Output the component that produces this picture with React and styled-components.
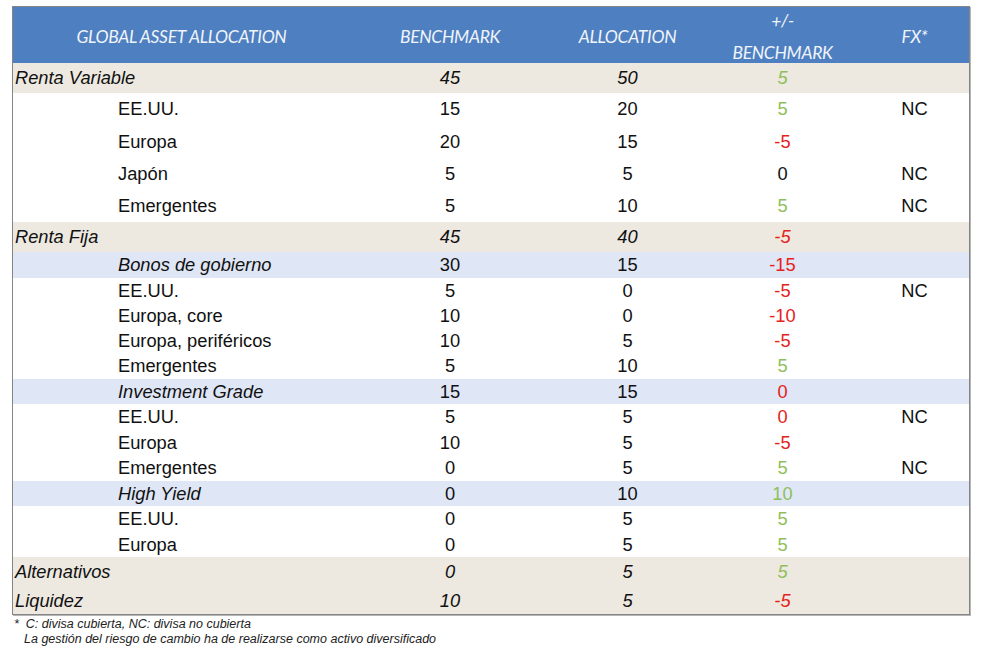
import React from 'react'
import styled, { createGlobalStyle } from 'styled-components'

const GlobalStyle = createGlobalStyle`
  body {
    margin: 0;
    background: #fff;
    font-family: 'Liberation Sans', Arial, sans-serif;
  }
`

const G = '#8fbf5a'
const R = '#e5231b'
const K = '#111'

const rows = [
  { kind: 'group', h: 30, label: 'Renta Variable', b: '45', a: '50', d: ['5', G] },
  { kind: 'item', h: 32.5, label: 'EE.UU.', b: '15', a: '20', d: ['5', G], fx: 'NC' },
  { kind: 'item', h: 32.5, label: 'Europa', b: '20', a: '15', d: ['-5', R] },
  { kind: 'item', h: 32.5, label: 'Japón', b: '5', a: '5', d: ['0', K], fx: 'NC' },
  { kind: 'item', h: 31.5, label: 'Emergentes', b: '5', a: '10', d: ['5', G], fx: 'NC' },
  { kind: 'group', h: 30, label: 'Renta Fija', b: '45', a: '40', d: ['-5', R] },
  { kind: 'sub', h: 26, label: 'Bonos de gobierno', b: '30', a: '15', d: ['-15', R] },
  { kind: 'item', h: 25, label: 'EE.UU.', b: '5', a: '0', d: ['-5', R], fx: 'NC' },
  { kind: 'item', h: 25, label: 'Europa, core', b: '10', a: '0', d: ['-10', R] },
  { kind: 'item', h: 25, label: 'Europa, periféricos', b: '10', a: '5', d: ['-5', R] },
  { kind: 'item', h: 26, label: 'Emergentes', b: '5', a: '10', d: ['5', G] },
  { kind: 'sub', h: 25, label: 'Investment Grade', b: '15', a: '15', d: ['0', R] },
  { kind: 'item', h: 26, label: 'EE.UU.', b: '5', a: '5', d: ['0', R], fx: 'NC' },
  { kind: 'item', h: 25, label: 'Europa', b: '10', a: '5', d: ['-5', R] },
  { kind: 'item', h: 26, label: 'Emergentes', b: '0', a: '5', d: ['5', G], fx: 'NC' },
  { kind: 'sub', h: 25, label: 'High Yield', b: '0', a: '10', d: ['10', G] },
  { kind: 'item', h: 26, label: 'EE.UU.', b: '0', a: '5', d: ['5', G] },
  { kind: 'item', h: 25, label: 'Europa', b: '0', a: '5', d: ['5', G] },
  { kind: 'group', h: 30, label: 'Alternativos', b: '0', a: '5', d: ['5', G] },
  { kind: 'group', h: 27, label: 'Liquidez', b: '10', a: '5', d: ['-5', R] },
]

const bg = { group: '#ede9e1', sub: '#dfe6f6', item: '#fff' }

const Page = styled.div`
  padding: 6px 0 0 12px;
`

const Table = styled.div`
  width: 958px;
  box-sizing: border-box;
  border: 1px solid #858585;
  box-shadow: 1px 1px 0 #b5b5b5;
`

const cols = '337px 200px 155px 155px 1fr'

const Header = styled.div`
  display: grid;
  grid-template-columns: ${cols};
  grid-template-rows: 56px;
  background: #4e7fc0;
  color: #f0f4fb;
  font-family: Lato, 'Open Sans', sans-serif;
  font-style: italic;
  font-size: 17.5px;
  letter-spacing: -0.3px;
`

const HeadCell = styled.div`
  min-height: 0;
  display: flex;
  flex-direction: column;
  align-items: center;
  justify-content: center;
  line-height: 32px;
  padding-top: 3px;
`

const Row = styled.div`
  display: grid;
  grid-template-columns: ${cols};
  align-items: center;
  height: ${p => p.$h}px;
  background: ${p => bg[p.$kind]};
  font-size: 18.3px;
  color: #111;
`

const Label = styled.div`
  padding-left: ${p => (p.$kind === 'group' ? 2 : 105)}px;
  font-style: ${p => (p.$kind === 'item' ? 'normal' : 'italic')};
`

const Num = styled.div`
  text-align: center;
  font-style: ${p => (p.$italic ? 'italic' : 'normal')};
  color: ${p => p.$color || '#111'};
`

const Notes = styled.div`
  font-size: 12.5px;
  font-style: italic;
  color: #222;
  line-height: 15px;
  padding: 2px 0 0 2px;
`

const NoteLine = styled.div`
  padding-left: ${p => (p.$indent ? 10 : 0)}px;
  white-space: pre;
`

export default function App() {
  return (
    <Page>
      <GlobalStyle />
      <Table>
        <Header>
          <HeadCell>GLOBAL ASSET ALLOCATION</HeadCell>
          <HeadCell>BENCHMARK</HeadCell>
          <HeadCell>ALLOCATION</HeadCell>
          <HeadCell>
            <span>+/-</span>
            <span>BENCHMARK</span>
          </HeadCell>
          <HeadCell>FX*</HeadCell>
        </Header>
        {rows.map((r, i) => (
          <Row key={i} $h={r.h} $kind={r.kind}>
            <Label $kind={r.kind}>{r.label}</Label>
            <Num $italic={r.kind === 'group'}>{r.b}</Num>
            <Num $italic={r.kind === 'group'}>{r.a}</Num>
            <Num $italic={r.kind === 'group'} $color={r.d[1]}>{r.d[0]}</Num>
            <Num>{r.fx || ''}</Num>
          </Row>
        ))}
      </Table>
      <Notes>
        <NoteLine>{'*  C: divisa cubierta, NC: divisa no cubierta'}</NoteLine>
        <NoteLine $indent>La gestión del riesgo de cambio ha de realizarse como activo diversificado</NoteLine>
      </Notes>
    </Page>
  )
}
